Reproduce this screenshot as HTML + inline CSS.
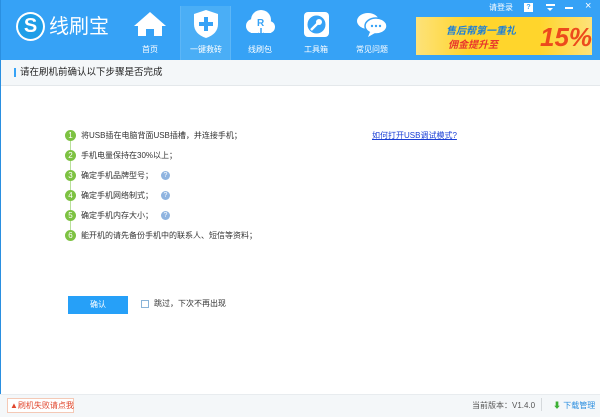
<!DOCTYPE html>
<html><head><meta charset="utf-8"><style>
*{margin:0;padding:0;box-sizing:border-box}
body{width:600px;height:417px;overflow:hidden;position:relative;background:#fff;font-family:"Liberation Sans","Noto Sans CJK SC",sans-serif;color:#333}
.hdr{position:absolute;left:0;top:0;width:600px;height:60px;background:#36a2f6}
.abs{position:absolute;white-space:nowrap}
.nav{position:absolute;top:6px;width:52px;height:54px;color:#fff;font-size:8px;text-align:center}
.nav .lbl{position:absolute;top:38px;left:0;width:100%}
.step{position:absolute;left:65px;font-size:8px;color:#333;height:11px;line-height:11px}
.step .c{position:absolute;left:0;top:0;width:11px;height:11px;border-radius:50%;background:#7dc242;color:#fff;font-size:8px;text-align:center;line-height:11px}
.step .t{position:absolute;left:16px;white-space:nowrap}
.q{display:inline-block;width:9px;height:9px;border-radius:50%;background:#8fb4e0;color:#fff;font-size:7px;text-align:center;line-height:9px;margin-left:8px;vertical-align:middle}
</style></head><body>
<div class="hdr"></div>
<!-- logo -->
<div class="abs" style="left:16px;top:12px;width:29px;height:29px;border-radius:50%;background:#fff"></div>
<div class="abs" style="left:18px;top:14px;width:25px;height:25px;border-radius:50%;background:#1e9ee8;color:#fff;font-weight:bold;font-size:20px;line-height:25px;text-align:center">S</div>
<div class="abs" style="left:49px;top:15px;color:#fff;font-size:20px;line-height:24px">线刷宝</div>
<!-- nav -->
<div class="nav" style="left:124px"><svg width="52" height="36"><path d="M26 6 L10 20 L14 20 L14 30 L22 30 L22 23 L30 23 L30 30 L38 30 L38 20 L42 20 Z" fill="#fff"/></svg><div class="lbl">首页</div></div>
<div class="abs" style="left:180px;top:6px;width:51px;height:54px;background:#4aaef6;border-left:1px solid #5cb6f7;border-right:1px solid #5cb6f7"></div>
<div class="nav" style="left:180px"><svg width="52" height="36"><path d="M26 4 L14 8 L14 18 Q14 28 26 32 Q38 28 38 18 L38 8 Z" fill="#fff"/><rect x="24" y="11" width="4" height="14" fill="#36a2f6"/><rect x="19" y="16" width="14" height="4" fill="#36a2f6"/></svg><div class="lbl">一键救砖</div></div>
<div class="nav" style="left:234px"><svg width="52" height="36"><circle cx="19" cy="20" r="7" fill="#fff"/><circle cx="27" cy="14" r="10" fill="#fff"/><circle cx="35" cy="21" r="6" fill="#fff"/><rect x="17" y="20" width="20" height="7" fill="#fff"/><text x="23" y="20" font-size="10" font-weight="bold" fill="#36a2f6" font-family="Liberation Sans">R</text><path d="M27 22v8M24 27l3 3 3-3" stroke="#36a2f6" stroke-width="1.5" fill="none"/></svg><div class="lbl">线刷包</div></div>
<div class="nav" style="left:290px"><svg width="52" height="36"><rect x="14" y="6" width="25" height="25" rx="4" fill="#fff"/><circle cx="26.5" cy="18.5" r="9" fill="#36a2f6"/><path d="M21 24 L28 17" stroke="#fff" stroke-width="2.5"/><circle cx="29" cy="16" r="3" fill="#fff"/></svg><div class="lbl">工具箱</div></div>
<div class="nav" style="left:346px"><svg width="52" height="36"><ellipse cx="22" cy="15" rx="11" ry="8" fill="#fff"/><ellipse cx="30" cy="20" rx="11" ry="8" fill="#fff" stroke="#36a2f6" stroke-width="1.5"/><path d="M24 26 L22 31 L29 27Z" fill="#fff"/><circle cx="26" cy="20" r="1.2" fill="#36a2f6"/><circle cx="30" cy="20" r="1.2" fill="#36a2f6"/><circle cx="34" cy="20" r="1.2" fill="#36a2f6"/></svg><div class="lbl">常见问题</div></div>
<!-- top right -->
<div class="abs" style="left:489px;top:2px;font-size:8px;color:#fff">请登录</div>
<div class="abs" style="left:524px;top:3px;width:9px;height:9px;background:#fff;color:#36a2f6;font-size:7px;text-align:center;line-height:9px;font-weight:bold">?</div>
<div class="abs" style="left:546px;top:4px;width:9px;height:2px;background:#fff"></div>
<div class="abs" style="left:547px;top:8px;width:0;height:0;border-left:3.5px solid transparent;border-right:3.5px solid transparent;border-top:3px solid #fff"></div>
<div class="abs" style="left:565px;top:7px;width:8px;height:1.5px;background:#fff"></div>
<div class="abs" style="left:585px;top:0px;color:#fff;font-size:11px">×</div>
<!-- banner -->
<div class="abs" style="left:416px;top:17px;width:176px;height:38px;background:linear-gradient(90deg,#fde27a,#ffd52c 30%,#ffd52c 70%,#fde27a);overflow:hidden">
<div class="abs" style="left:30px;top:5px;font-size:10px;font-weight:bold;font-style:italic;color:#1e7fd6">售后帮第一重礼</div>
<div class="abs" style="left:32px;top:19px;font-size:10px;font-weight:bold;font-style:italic;color:#e8362c">佣金提升至</div>
<div class="abs" style="left:124px;top:5px;font-size:26px;font-weight:bold;font-style:italic;color:#ec4a1c;line-height:30px">15%</div>
</div>
<!-- title bar -->
<div class="abs" style="left:0;top:60px;width:600px;height:26px;background:#f4f7f9;border-bottom:1px solid #e4e8eb"></div>
<div class="abs" style="left:14px;top:68px;width:2px;height:9px;background:#36a2f6"></div>
<div class="abs" style="left:20px;top:66px;font-size:9.5px;color:#222;line-height:13px">请在刷机前确认以下步骤是否完成</div>
<div class="abs" style="left:0;top:0;width:1px;height:417px;background:#2a8fe0"></div>
<!-- steps -->
<div class="abs" style="left:70px;top:135px;width:1px;height:100px;background:#b9e09a"></div>
<div class="step" style="top:130px"><div class="c">1</div><div class="t">将USB插在电脑背面USB插槽，并连接手机；</div></div>
<div class="step" style="top:150px"><div class="c">2</div><div class="t">手机电量保持在30%以上；</div></div>
<div class="step" style="top:170px"><div class="c">3</div><div class="t">确定手机品牌型号；<span class="q">?</span></div></div>
<div class="step" style="top:190px"><div class="c">4</div><div class="t">确定手机网络制式；<span class="q">?</span></div></div>
<div class="step" style="top:210px"><div class="c">5</div><div class="t">确定手机内存大小；<span class="q">?</span></div></div>
<div class="step" style="top:230px"><div class="c">6</div><div class="t">能开机的请先备份手机中的联系人、短信等资料；</div></div>
<div class="abs" style="left:372px;top:130px;font-size:8px;color:#1a3fd6;text-decoration:underline;line-height:11px">如何打开USB调试模式?</div>
<!-- confirm -->
<div class="abs" style="left:68px;top:296px;width:60px;height:18px;background:#26a0f8;color:#fff;font-size:8px;text-align:center;line-height:18px">确认</div>
<div class="abs" style="left:141px;top:300px;width:8px;height:8px;border:1px solid #8ab4d8;background:#fff"></div>
<div class="abs" style="left:154px;top:298px;font-size:8px;line-height:11px">跳过，下次不再出现</div>
<!-- footer -->
<div class="abs" style="left:0;top:394px;width:600px;height:23px;background:#f4f7f9;border-top:1px solid #e8ecef"></div>
<div class="abs" style="left:7px;top:398px;width:67px;height:15px;border:1px solid #f4c9b6;background:#fff;font-size:8px;color:#e0452c;line-height:13px;padding-left:2px">▲刷机失败请点我</div>
<div class="abs" style="left:472px;top:400px;font-size:8px;color:#555;line-height:11px">当前版本：V1.4.0</div>
<div class="abs" style="left:541px;top:398px;width:1px;height:13px;background:#d5d9dc"></div>
<div class="abs" style="left:553px;top:400px;font-size:8px;color:#2c8fe0;line-height:11px"><span style="color:#3cb034">⬇</span> 下载管理</div>
</body></html>
